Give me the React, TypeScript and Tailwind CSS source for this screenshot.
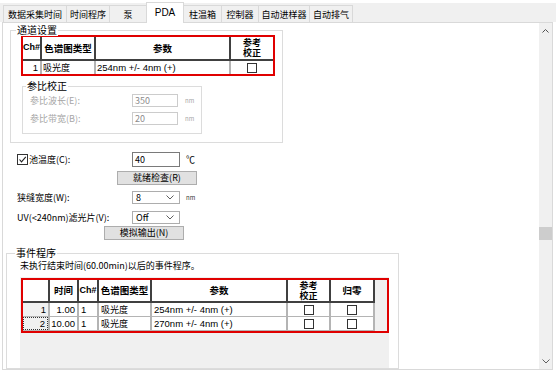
import React from "react";

const CJK = "font-['Noto_Sans_CJK_SC',sans-serif]";
const ARIAL = "font-['Liberation_Sans','Noto_Sans_CJK_SC',sans-serif]";

function Box() {
  return <span className="block w-[10px] h-[10px] border border-[#333333] bg-white" />;
}

function ChevronDown() {
  return (
    <svg width="8" height="5" viewBox="0 0 8 5">
      <path d="M0.5 0.5 L4 4 L7.5 0.5" fill="none" stroke="#606060" strokeWidth="1" />
    </svg>
  );
}

function ChevronUp() {
  return (
    <svg width="7" height="4" viewBox="0 0 7 4">
      <path d="M0.5 3.5 L3.5 0.5 L6.5 3.5" fill="none" stroke="#505050" strokeWidth="1" />
    </svg>
  );
}

const tabs: [string, number][] = [
  ["数据采集时间", 63],
  ["时间程序", 43],
  ["泵", 37],
  ["PDA", 38],
  ["柱温箱", 37],
  ["控制器", 37],
  ["自动进样器", 51],
  ["自动排气", 44],
];

function Tabs() {
  return (
    <div className="h-[22px] bg-white pt-[3px]">
      <div className="h-[19px] bg-[#f0f0f0] flex items-end pl-[3px]">
        {tabs.map(([t, w], i) =>
          t === "PDA" ? (
            <div
              key={t}
              style={{ width: w }}
              className={`relative z-10 h-[21px] mb-[-1px] bg-white border-t border-l border-r border-[#d9d9d9] flex items-center justify-center pb-[2px] text-[10px] text-black ${ARIAL}`}
            >
              PDA
            </div>
          ) : (
            <div
              key={t}
              style={{ width: w }}
              className={`h-[17px] bg-[#f0f0f0] border-t border-l border-[#d9d9d9] ${i === tabs.length - 1 ? "border-r" : ""} ${i === 4 ? "border-l-0" : ""} flex items-center justify-center text-[9px] leading-[11px] text-black whitespace-nowrap ${CJK}`}
            >
              {t}
            </div>
          )
        )}
      </div>
    </div>
  );
}

function TopTable() {
  const hd = "border-r-2 border-[#404040] flex items-center justify-center";
  return (
    <div className="ml-[10px] mt-[4px] w-[254px] border-2 border-[#e00000] bg-white">
      <div className={`flex h-[24px] border-b-2 border-[#404040] font-bold text-[9.5px] ${CJK}`}>
        <div className={`w-[19px] ${hd} ${ARIAL} text-[9px]`}>Ch#</div>
        <div className={`w-[54px] ${hd}`}>色谱图类型</div>
        <div className={`w-[135px] ${hd}`}>参数</div>
        <div className="flex-1 flex flex-col items-center justify-center text-center text-[9px] leading-[10px]">
          <span>参考</span>
          <span>校正</span>
        </div>
      </div>
      <div className="flex h-[13px] text-[9px] leading-[13px]">
        <div className={`w-[19px] border-r-2 border-[#b4b4b4] text-right pr-[2px] ${ARIAL} text-[9.5px]`}>1</div>
        <div className={`w-[54px] border-r-2 border-[#b4b4b4] pl-[1px] ${CJK}`}>吸光度</div>
        <div className={`w-[135px] border-r-2 border-[#b4b4b4] pl-[1px] ${ARIAL} text-[9.5px]`}>254nm +/- 4nm (+)</div>
        <div className="flex-1 flex items-center justify-center">
          <Box />
        </div>
      </div>
    </div>
  );
}

function GroupLabel({ text, left }: { text: string; left: string }) {
  return (
    <span className={`absolute ${left} top-[-7px] bg-white px-[1px] text-[10px] leading-[12px] text-black ${CJK}`}>
      {text}
    </span>
  );
}

function DisabledRow({ label, value, mt }: { label: string; value: string; mt: string }) {
  return (
    <div className={`flex items-center ${mt} h-[13px]`}>
      <div className={`ml-[7px] w-[102px] text-[9px] text-[#a6a6a6] ${CJK}`}>{label}</div>
      <div className={`w-[46px] h-[13px] border border-[#cccccc] bg-white text-[9px] leading-[11px] pl-[2px] text-[#8c8c8c] ${CJK}`}>
        {value}
      </div>
      <span className={`ml-[7px] text-[6px] text-[#a6a6a6] ${CJK}`}>nm</span>
    </div>
  );
}

function Button({ text, ml, mt }: { text: string; ml: string; mt: string }) {
  return (
    <div
      className={`${ml} ${mt} w-[80px] h-[14px] bg-[#e1e1e1] border border-[#adadad] flex items-center justify-center text-[9px] text-black ${CJK}`}
    >
      {text}
    </div>
  );
}

function SelectRow({ label, value, mt, unit }: { label: string; value: string; mt: string; unit?: string }) {
  return (
    <div className={`flex items-center ${mt} h-[13px]`}>
      <div className={`ml-[14px] w-[115px] text-[9px] text-black ${CJK}`}>{label}</div>
      <div className="w-[48px] h-[13px] border border-[#adadad] bg-white flex items-center justify-between pl-[3px] pr-[5px]">
        <span className={`text-[9px] leading-[11px] text-black ${CJK}`}>{value}</span>
        <ChevronDown />
      </div>
      {unit && <span className={`ml-[6px] text-[6px] text-[#333] ${CJK}`}>{unit}</span>}
    </div>
  );
}

function BottomGrid() {
  const hd = "h-full border-r-2 border-b-2 border-[#404040] bg-white flex items-center justify-center";
  const cell = "h-full border-r-2 border-b border-[#b4b4b4] bg-white";
  const rows = [
    { n: "1", t: "1.00", p: "254nm +/- 4nm (+)", focus: false },
    { n: "2", t: "10.00", p: "270nm +/- 4nm (+)", focus: true },
  ];
  return (
    <div className="ml-[13px] mt-[5px] w-[369px] flex-1 bg-[#f0f0f0] pt-[1px] pl-[1px]">
      <div className="w-[368px] border-2 border-[#e00000]">
        <div className={`flex h-[23px] font-bold text-[9.5px] ${CJK}`}>
          <div className={`w-[27px] ${hd}`} />
          <div className={`w-[29px] ${hd}`}>时间</div>
          <div className={`w-[20px] ${hd} ${ARIAL} text-[9px]`}>Ch#</div>
          <div className={`w-[53px] ${hd}`}>色谱图类型</div>
          <div className={`w-[136px] ${hd}`}>参数</div>
          <div className={`w-[43px] ${hd} flex-col text-[9px] leading-[10px]`}>
            <span>参考</span>
            <span>校正</span>
          </div>
          <div className={`w-[44px] ${hd}`}>归零</div>
          <div className="flex-1 h-full bg-[#f0f0f0]" />
        </div>
        {rows.map((r) => (
          <div key={r.n} className="flex h-[14px] text-[9.5px] leading-[13px]">
            <div className={`w-[27px] h-full border-r-2 border-b border-[#b4b4b4] bg-[#f0f0f0] ${ARIAL}`}>
              <div className={`h-full text-right pr-[2px] ${r.focus ? "border border-dotted border-[#333] leading-[11px]" : ""}`}>{r.n}</div>
            </div>
            <div className={`w-[29px] ${cell} text-right pr-[2px] ${ARIAL}`}>{r.t}</div>
            <div className={`w-[20px] ${cell} pl-[2px] ${ARIAL}`}>1</div>
            <div className={`w-[53px] ${cell} pl-[2px] text-[9px] ${CJK}`}>吸光度</div>
            <div className={`w-[136px] ${cell} pl-[2px] ${ARIAL}`}>{r.p}</div>
            <div className={`w-[43px] ${cell} flex items-center justify-center`}>
              <Box />
            </div>
            <div className={`w-[44px] ${cell} flex items-center justify-center`}>
              <Box />
            </div>
            <div className="flex-1 h-full bg-[#f0f0f0]" />
          </div>
        ))}
      </div>
    </div>
  );
}

function Scrollbar() {
  return (
    <div className="w-[13px] h-full bg-[#f0f0f0] flex flex-col">
      <div className="h-[16px] flex items-center justify-center">
        <ChevronUp />
      </div>
      <div className="mt-[188px] h-[13px] bg-[#cdcdcd]" />
      <div className="flex-1" />
      <div className="h-[16px] flex items-center justify-center">
        <ChevronDown />
      </div>
    </div>
  );
}

export default function App() {
  return (
    <div className={`w-[556px] h-[373px] bg-white overflow-hidden ${CJK}`}>
      <Tabs />
      <div className="ml-[2px] w-[551px] h-[348px] border border-[#d9d9d9] flex bg-white">
        <div className="w-[536px] h-full flex flex-col overflow-hidden">
          {/* 通道设置 */}
          <div className="relative ml-[7px] mt-[7px] w-[273px] h-[113px] border border-[#dcdcdc] flex flex-col shrink-0">
            <GroupLabel text="通道设置" left="left-[5px]" />
            <TopTable />
            <div className="relative ml-[11px] mt-[10px] w-[180px] h-[48px] border border-[#dcdcdc]">
              <GroupLabel text="参比校正" left="left-[3px]" />
              <DisabledRow label="参比波长(E):" value="350" mt="mt-[7px]" />
              <DisabledRow label="参比带宽(B):" value="20" mt="mt-[5px]" />
            </div>
          </div>

          {/* 池温度 */}
          <div className="flex items-center mt-[9px] h-[15px] shrink-0">
            <div className="ml-[14px] w-[115px] flex items-center">
              <span className="w-[11px] h-[11px] border border-[#333] bg-white flex items-center justify-center">
                <svg width="9" height="9" viewBox="0 0 9 9">
                  <path d="M1.5 4.5 L3.5 6.8 L7.8 1.8" fill="none" stroke="#222" strokeWidth="1.1" />
                </svg>
              </span>
              <span className={`ml-[1px] text-[9px] text-black ${CJK}`}>池温度(C):</span>
            </div>
            <div className={`w-[48px] h-[15px] border border-[#7a7a7a] bg-white text-[9px] leading-[13px] pl-[2px] text-black ${CJK}`}>
              40
            </div>
            <span className={`ml-[6px] text-[9px] text-black ${CJK}`}>℃</span>
          </div>

          <div className="shrink-0">
            <Button text="就绪检查(R)" ml="ml-[114px]" mt="mt-[4px]" />
          </div>

          <div className="shrink-0">
            <SelectRow label="狭缝宽度(W):" value="8" mt="mt-[6px]" unit="nm" />
            <SelectRow label="UV(<240nm)滤光片(V):" value="Off" mt="mt-[7px]" />
          </div>

          <div className="shrink-0">
            <Button text="模拟输出(N)" ml="ml-[101px]" mt="mt-[2px]" />
          </div>

          {/* 事件程序 */}
          <div className="relative ml-[3px] mt-[13px] w-[393px] h-[116px] border border-[#dcdcdc] flex flex-col shrink-0">
            <GroupLabel text="事件程序" left="left-[8px]" />
            <div className={`ml-[13px] mt-[6px] h-[12px] text-[9px] leading-[12px] text-black ${CJK}`}>
              未执行结束时间(60.00min)以后的事件程序。
            </div>
            <BottomGrid />
          </div>
        </div>
        <Scrollbar />
      </div>
    </div>
  );
}
